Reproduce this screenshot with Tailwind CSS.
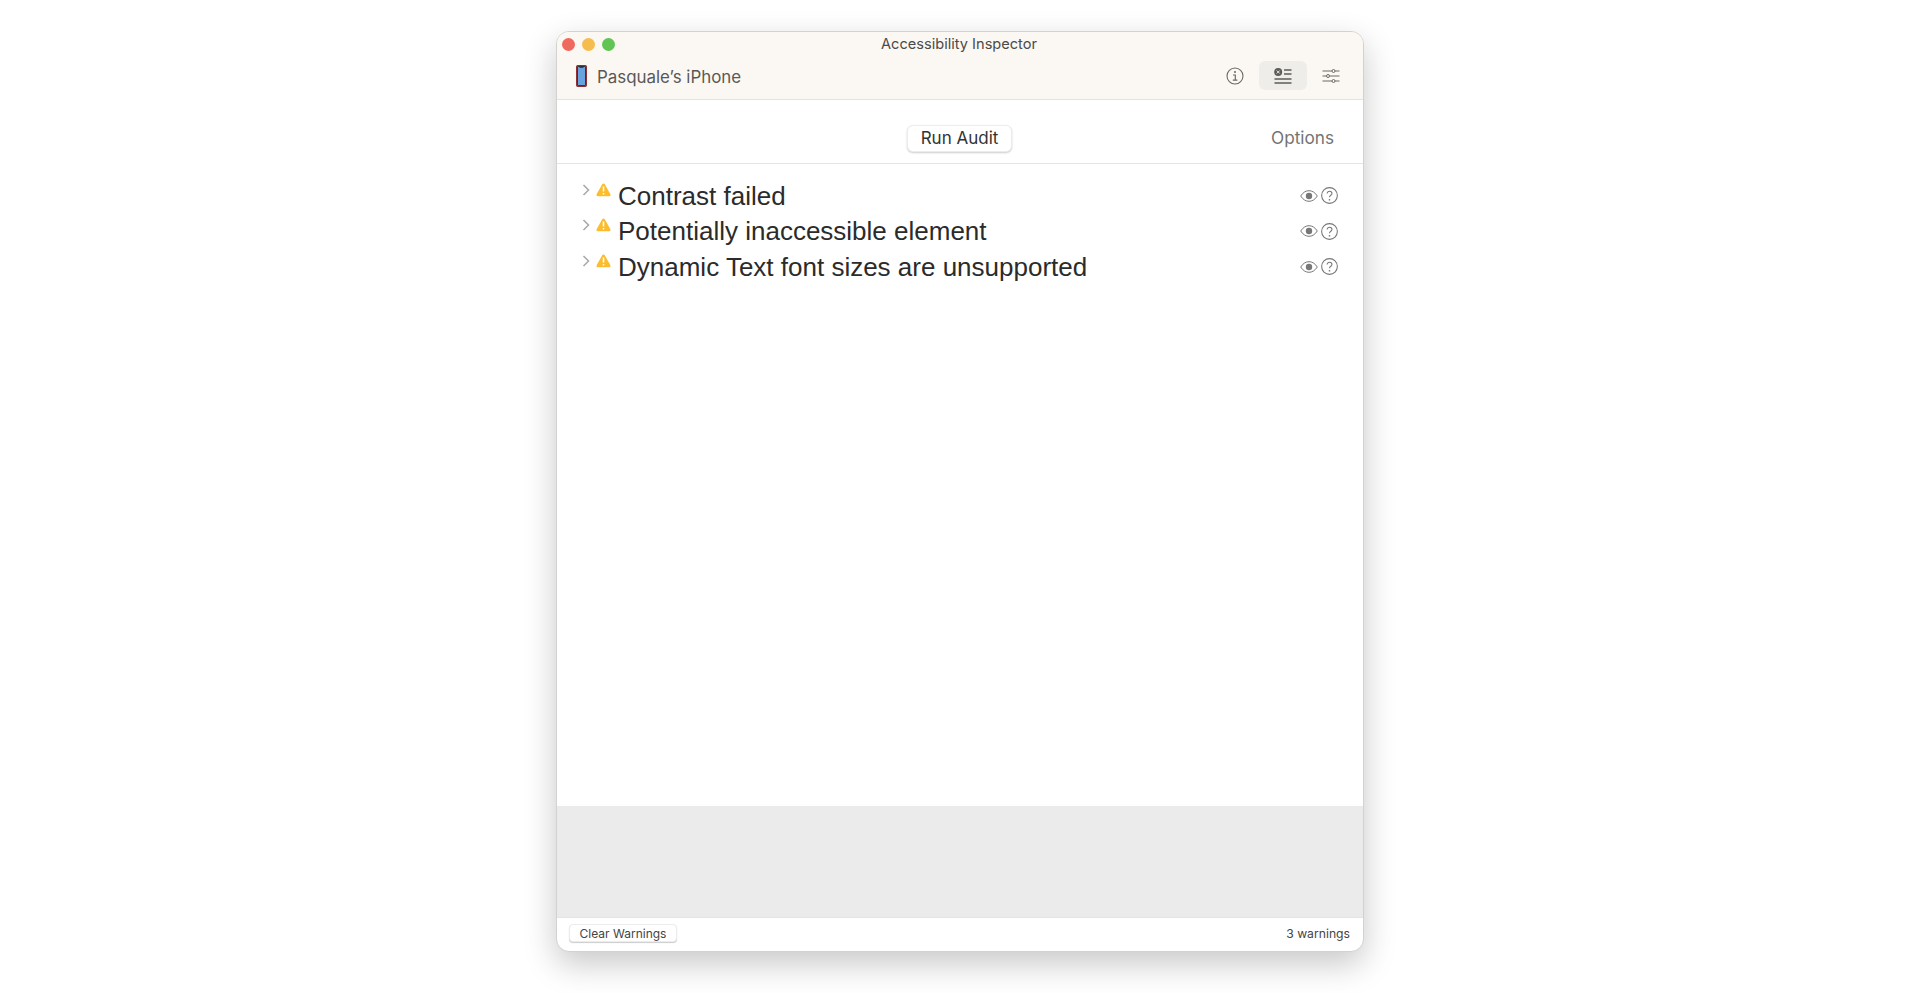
<!DOCTYPE html>
<html lang="en">
<head>
<meta charset="UTF-8">
<title>Accessibility Inspector</title>
<script src="https://cdn.jsdelivr.net/npm/@tailwindcss/browser@4"></script>
</head>
<body class="bg-white h-[993px] overflow-hidden font-['Inter','Liberation_Sans',sans-serif]">
<div class="flex justify-center pt-[31px]">
  <div class="w-[808px] h-[921px] flex flex-col rounded-[13px] overflow-hidden bg-white border border-[#d2d2d0] shadow-[0_12px_32px_rgba(0,0,0,0.22)]">

    <!-- title + toolbar -->
    <div class="h-[68px] shrink-0 bg-[#fbf8f4] border-b border-[#e4e3e1] flex flex-col">
      <div class="relative h-[24px] flex items-center justify-center">
        <div class="absolute left-[5px] top-[6px] flex gap-[7px]">
          <span class="w-[13px] h-[13px] rounded-full bg-[#ee6a5f]"></span>
          <span class="w-[13px] h-[13px] rounded-full bg-[#f5bd4f]"></span>
          <span class="w-[13px] h-[13px] rounded-full bg-[#61c454]"></span>
        </div>
        <span class="text-[14.6px] text-[#4c4a48] mt-[1px] -ml-[2px]">Accessibility Inspector</span>
      </div>
      <div class="flex-1 flex items-center pl-[19px] pr-[23px]">
        <svg class="w-[11px] h-[22px] mb-[3px]" viewBox="0 0 11 22">
          <rect x="0.6" y="0.6" width="9.8" height="20.8" rx="1.2" fill="#67a3e0" stroke="#8f2f2f" stroke-width="1.2"/>
          <rect x="1.5" y="1.5" width="8" height="19" rx="0.6" fill="none" stroke="#222" stroke-width="0.8"/>
          <rect x="3.5" y="1.5" width="4" height="1.2" fill="#222"/>
        </svg>
        <span class="ml-[10px] text-[16.9px] text-[#5a5856]">Pasquale’s iPhone</span>
        <div class="ml-auto flex items-center mb-[4px]">
          <svg class="w-[18px] h-[18px] mr-[15px] text-[#6a6866]" viewBox="0 0 18 18" fill="none" stroke="currentColor">
            <circle cx="9" cy="9" r="8" stroke-width="1.1"/>
            <circle cx="9" cy="5" r="1" fill="currentColor" stroke="none"/>
            <path d="M7 8h2.300v5M6.800 13.200h4.600" stroke-width="1.200"/>
          </svg>
          <div class="w-[48px] h-[29px] rounded-[6px] bg-[#efedea] flex items-center justify-center">
            <svg class="w-[18px] h-[16px] text-[#5e5c5a]" viewBox="0 0 18 16" fill="none" stroke="currentColor" stroke-width="1.300">
              <circle cx="4.200" cy="4" r="4" fill="currentColor" stroke="none"/>
              <path d="M2.700 2.500l3 3M5.700 2.500l-3 3" stroke="#efedea" stroke-width="1"/>
              <path d="M10 2h7.500M10 6h7.500M.5 11h17M.5 15h17"/>
            </svg>
          </div>
          <svg class="w-[18px] h-[14px] ml-[15px] text-[#6a6866]" viewBox="0 0 18 14" fill="none" stroke="currentColor" stroke-width="1">
            <path d="M.5 2h9.500M13 2h4.500M.5 7h4M7.500 7h10M.5 12h9.500M13 12h4.500"/>
            <circle cx="11.500" cy="2" r="1.500"/>
            <circle cx="6" cy="7" r="1.500"/>
            <circle cx="11.500" cy="12" r="1.500"/>
          </svg>
        </div>
      </div>
    </div>

    <!-- audit bar -->
    <div class="relative h-[64px] shrink-0 border-b border-[#e4e4e4] flex items-center justify-center pt-[25px] pb-[11px]">
      <button class="w-[105px] h-[27px] -ml-[1px] bg-white rounded-[6px] border border-[#ececec] shadow-[0_1px_2px_rgba(0,0,0,0.2)] text-[17px] text-[#333]" type="button">Run Audit</button>
      <span class="absolute right-[29px] top-[25px] text-[17.200px] text-[#737373]">Options</span>
    </div>

    <!-- warnings list -->
    <div class="flex-1 pt-[14px] pl-[25px] pr-[25px] text-[#2b2b2b] font-['Liberation_Sans',sans-serif]">
      <div class="h-[35.500px] flex items-center">
        <svg class="w-[8px] h-[12px] mb-[12px] text-[#a8a8a8]" viewBox="0 0 8 12" fill="none" stroke="currentColor" stroke-width="1.500"><path d="M1.500 1l5 5-5 5"/></svg>
        <svg class="w-[15px] h-[14px] ml-[6px] mb-[12px]" viewBox="0 0 15 14"><path d="M7.500.5c.6 0 1 .3 1.300.8l5.600 10c.5.900 0 1.900-1.100 1.900H1.700c-1.100 0-1.600-1-1.100-1.900l5.600-10c.3-.5.700-.8 1.300-.8z" fill="#fbbd2e"/><path d="M7.500 3.500v5M7.500 10v1.500" stroke="#fff" stroke-width="1.500"/></svg>
        <span class="ml-[7px] text-[26px] leading-none">Contrast failed</span>
        <div class="ml-auto flex items-center gap-[3px]">
          <svg class="w-[18px] h-[12px] text-[#777]" viewBox="0 0 18 12" fill="none" stroke="currentColor" stroke-width="1"><path d="M.7 6C3 2.300 6 .7 9 .7S15 2.300 17.300 6C15 9.700 12 11.300 9 11.300S3 9.700 .7 6z"/><circle cx="9" cy="6" r="3.200" fill="currentColor" stroke="none"/></svg>
          <svg class="w-[17px] h-[17px] text-[#777]" viewBox="0 0 16 16" fill="none" stroke="currentColor" stroke-width="1"><circle cx="8" cy="8" r="7.400"/><path d="M5.800 6.200c0-1.400 1-2.200 2.300-2.200s2.200.8 2.200 2c0 1.800-2.300 1.800-2.300 3.700"/><circle cx="8" cy="12" r=".8" fill="currentColor" stroke="none"/></svg>
        </div>
      </div>
      <div class="h-[35.500px] flex items-center">
        <svg class="w-[8px] h-[12px] mb-[12px] text-[#a8a8a8]" viewBox="0 0 8 12" fill="none" stroke="currentColor" stroke-width="1.500"><path d="M1.500 1l5 5-5 5"/></svg>
        <svg class="w-[15px] h-[14px] ml-[6px] mb-[12px]" viewBox="0 0 15 14"><path d="M7.500.5c.6 0 1 .3 1.300.8l5.600 10c.5.900 0 1.900-1.100 1.900H1.700c-1.100 0-1.600-1-1.100-1.900l5.600-10c.3-.5.700-.8 1.300-.8z" fill="#fbbd2e"/><path d="M7.500 3.500v5M7.500 10v1.500" stroke="#fff" stroke-width="1.500"/></svg>
        <span class="ml-[7px] text-[26px] leading-none">Potentially inaccessible element</span>
        <div class="ml-auto flex items-center gap-[3px]">
          <svg class="w-[18px] h-[12px] text-[#777]" viewBox="0 0 18 12" fill="none" stroke="currentColor" stroke-width="1"><path d="M.7 6C3 2.300 6 .7 9 .7S15 2.300 17.300 6C15 9.700 12 11.300 9 11.300S3 9.700 .7 6z"/><circle cx="9" cy="6" r="3.200" fill="currentColor" stroke="none"/></svg>
          <svg class="w-[17px] h-[17px] text-[#777]" viewBox="0 0 16 16" fill="none" stroke="currentColor" stroke-width="1"><circle cx="8" cy="8" r="7.400"/><path d="M5.800 6.200c0-1.400 1-2.200 2.300-2.200s2.200.8 2.200 2c0 1.800-2.300 1.800-2.300 3.700"/><circle cx="8" cy="12" r=".8" fill="currentColor" stroke="none"/></svg>
        </div>
      </div>
      <div class="h-[35.500px] flex items-center">
        <svg class="w-[8px] h-[12px] mb-[12px] text-[#a8a8a8]" viewBox="0 0 8 12" fill="none" stroke="currentColor" stroke-width="1.500"><path d="M1.500 1l5 5-5 5"/></svg>
        <svg class="w-[15px] h-[14px] ml-[6px] mb-[12px]" viewBox="0 0 15 14"><path d="M7.500.5c.6 0 1 .3 1.300.8l5.600 10c.5.900 0 1.900-1.100 1.900H1.700c-1.100 0-1.600-1-1.100-1.900l5.600-10c.3-.5.700-.8 1.300-.8z" fill="#fbbd2e"/><path d="M7.500 3.500v5M7.500 10v1.500" stroke="#fff" stroke-width="1.500"/></svg>
        <span class="ml-[7px] text-[26px] leading-none">Dynamic Text font sizes are unsupported</span>
        <div class="ml-auto flex items-center gap-[3px]">
          <svg class="w-[18px] h-[12px] text-[#777]" viewBox="0 0 18 12" fill="none" stroke="currentColor" stroke-width="1"><path d="M.7 6C3 2.300 6 .7 9 .7S15 2.300 17.300 6C15 9.700 12 11.300 9 11.300S3 9.700 .7 6z"/><circle cx="9" cy="6" r="3.200" fill="currentColor" stroke="none"/></svg>
          <svg class="w-[17px] h-[17px] text-[#777]" viewBox="0 0 16 16" fill="none" stroke="currentColor" stroke-width="1"><circle cx="8" cy="8" r="7.400"/><path d="M5.800 6.200c0-1.400 1-2.200 2.300-2.200s2.200.8 2.200 2c0 1.800-2.300 1.800-2.300 3.700"/><circle cx="8" cy="12" r=".8" fill="currentColor" stroke="none"/></svg>
        </div>
      </div>
    </div>

    <!-- detail area -->
    <div class="h-[111px] shrink-0 bg-[#ebebeb]"></div>

    <!-- footer -->
    <div class="h-[34px] shrink-0 border-t border-[#e4e4e4] flex items-center pl-[12px] pr-[13px]">
      <button class="w-[108px] h-[18px] mb-[4px] bg-white rounded-[4px] border border-[#ececec] shadow-[0_1px_1px_rgba(0,0,0,0.2)] text-[12px] text-[#444]" type="button">Clear Warnings</button>
      <span class="ml-auto text-[12.200px] text-[#444]">3 warnings</span>
    </div>
  </div>
</div>
</body>
</html>
